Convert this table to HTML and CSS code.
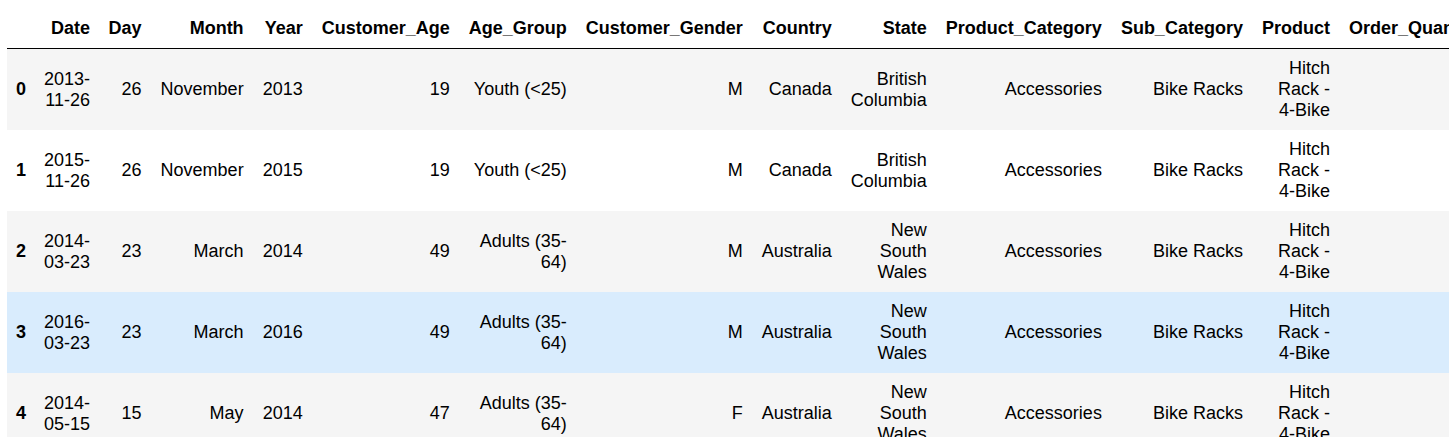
FILE: index.html
```html
<!DOCTYPE html>
<html>
<head>
<meta charset="utf-8">
<link rel="stylesheet" href="styles.css">
</head>
<body>
<div class="output">
<table class="dataframe">
<thead>
<tr>
<th></th><th>Date</th><th>Day</th><th>Month</th><th>Year</th><th>Customer_Age</th><th>Age_Group</th><th>Customer_Gender</th><th>Country</th><th>State</th><th>Product_Category</th><th>Sub_Category</th><th>Product</th><th>Order_Quantity</th><th>Unit_Cost</th><th>Unit_Price</th><th>Profit</th><th>Cost</th><th>Revenue</th>
</tr>
</thead>
<tbody>
<tr>
<th>0</th><td>2013-11-26</td><td>26</td><td>November</td><td>2013</td><td>19</td><td>Youth (&lt;25)</td><td>M</td><td>Canada</td><td>British Columbia</td><td>Accessories</td><td>Bike Racks</td><td>Hitch Rack - 4-Bike</td><td>8</td><td>45</td><td>120</td><td>590</td><td>360</td><td>950</td>
</tr>
<tr>
<th>1</th><td>2015-11-26</td><td>26</td><td>November</td><td>2015</td><td>19</td><td>Youth (&lt;25)</td><td>M</td><td>Canada</td><td>British Columbia</td><td>Accessories</td><td>Bike Racks</td><td>Hitch Rack - 4-Bike</td><td>8</td><td>45</td><td>120</td><td>590</td><td>360</td><td>950</td>
</tr>
<tr>
<th>2</th><td>2014-03-23</td><td>23</td><td>March</td><td>2014</td><td>49</td><td>Adults (35-64)</td><td>M</td><td>Australia</td><td>New South Wales</td><td>Accessories</td><td>Bike Racks</td><td>Hitch Rack - 4-Bike</td><td>23</td><td>45</td><td>120</td><td>1366</td><td>1035</td><td>2401</td>
</tr>
<tr class="hover">
<th>3</th><td>2016-03-23</td><td>23</td><td>March</td><td>2016</td><td>49</td><td>Adults (35-64)</td><td>M</td><td>Australia</td><td>New South Wales</td><td>Accessories</td><td>Bike Racks</td><td>Hitch Rack - 4-Bike</td><td>20</td><td>45</td><td>120</td><td>1188</td><td>900</td><td>2088</td>
</tr>
<tr>
<th>4</th><td>2014-05-15</td><td>15</td><td>May</td><td>2014</td><td>47</td><td>Adults (35-64)</td><td>F</td><td>Australia</td><td>New South Wales</td><td>Accessories</td><td>Bike Racks</td><td>Hitch Rack - 4-Bike</td><td>4</td><td>45</td><td>120</td><td>238</td><td>180</td><td>418</td>
</tr>
</tbody>
</table>
</div>
</body>
</html>
```

FILE: styles.css
```css
html, body {
  margin: 0;
  padding: 0;
  overflow: hidden;
  background: #fff;
}
.output {
  padding: 9px 0 0 7px;
  width: 1442px;
}
.dataframe {
  border-collapse: collapse;
  border-spacing: 0;
  border: none;
  color: #000;
  font-family: "Liberation Sans", Arial, sans-serif;
  font-size: 18px;
  width: min-content;
}
.dataframe thead {
  border-bottom: 1px solid #000;
  vertical-align: bottom;
}
.dataframe th,
.dataframe td {
  padding: 9px;
  line-height: normal;
  text-align: right;
  vertical-align: middle;
  border: none;
}
.dataframe tr > :nth-child(n+3) {
  padding-left: 9.5px;
  padding-right: 9.5px;
}
.dataframe th {
  font-weight: bold;
}
.dataframe tbody tr:nth-child(odd) {
  background: #f5f5f5;
}
.dataframe tbody tr.hover {
  background: #d9ecfd;
}
```
